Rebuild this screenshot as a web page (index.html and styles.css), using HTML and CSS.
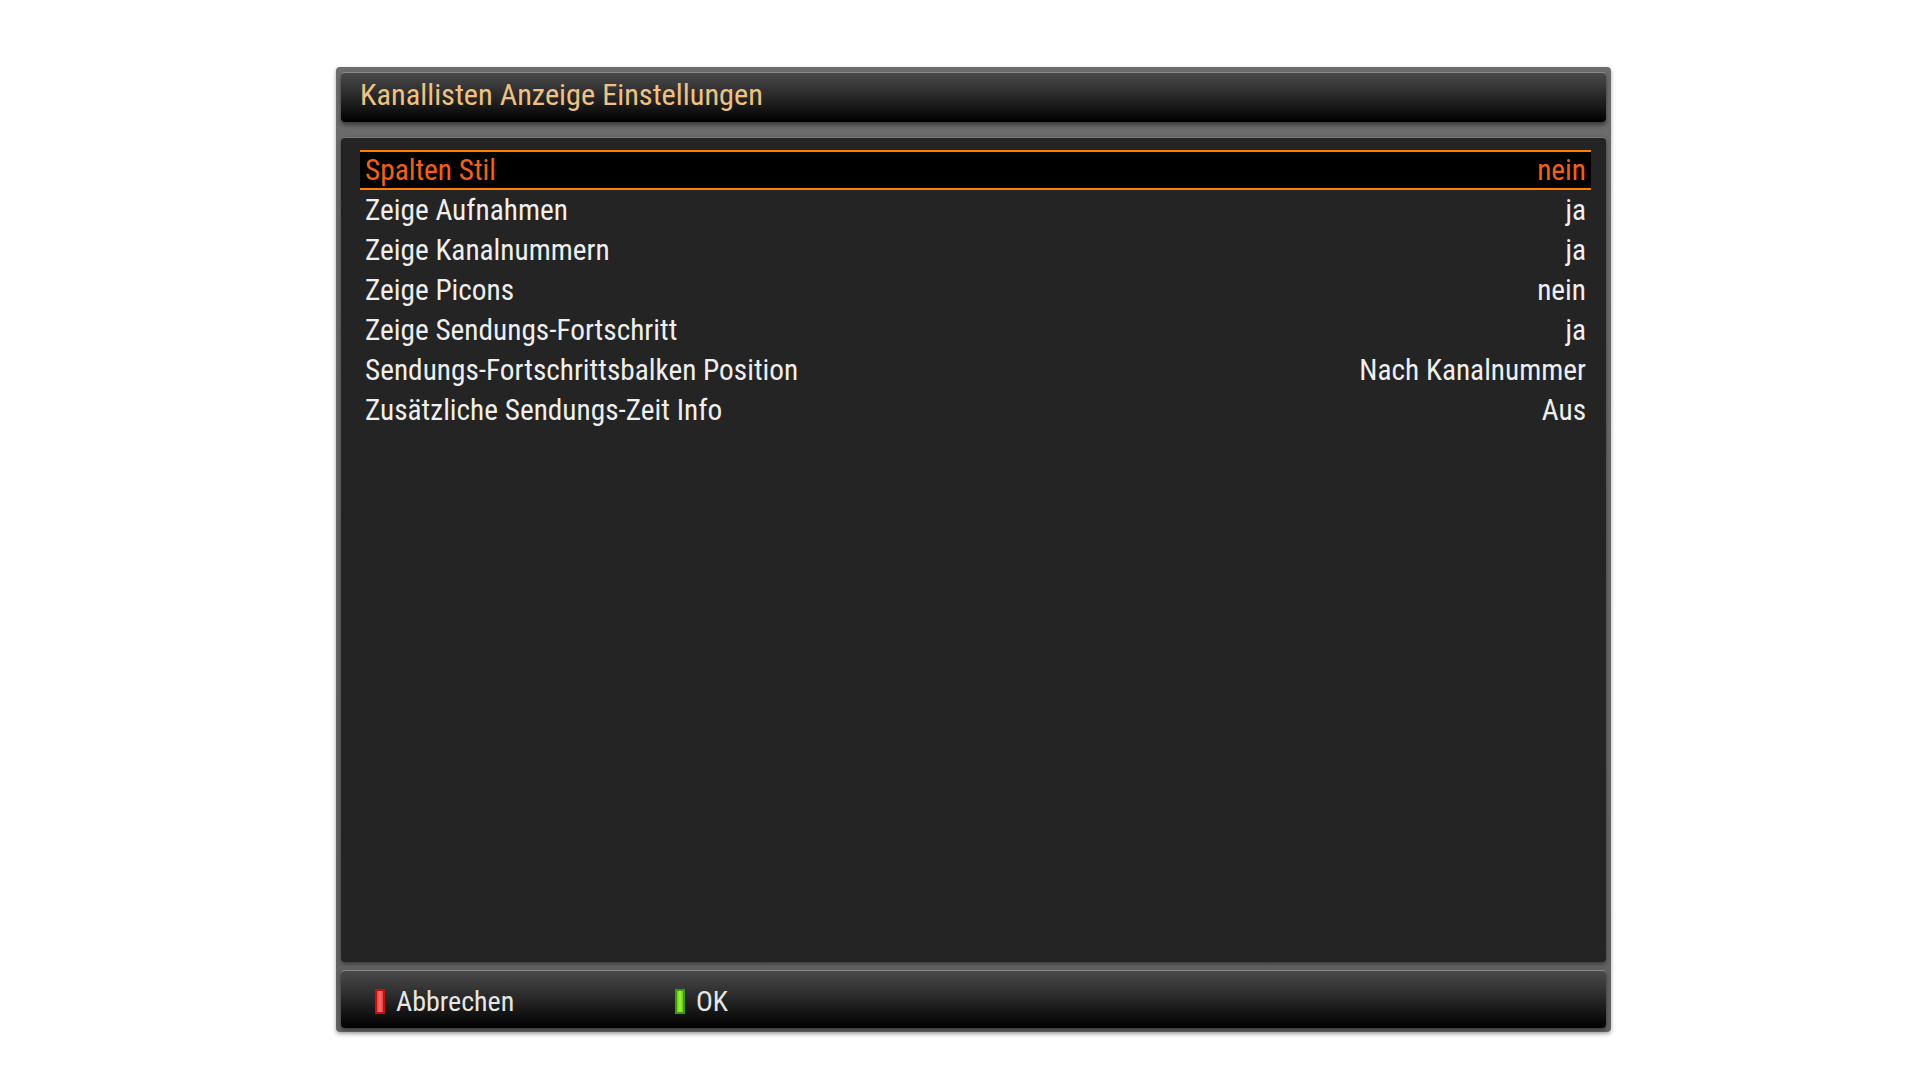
FILE: index.html
```html
<!DOCTYPE html>
<html lang="de">
<head>
<meta charset="utf-8">
<title>Kanallisten Anzeige Einstellungen</title>
<link rel="stylesheet" href="styles.css">
</head>
<body>
<div class="dialog">
  <div class="titlebar"><span class="title">Kanallisten Anzeige Einstellungen</span></div>
  <div class="content">
    <ul class="list">
      <li class="row selected"><span class="label">Spalten Stil</span><span class="value">nein</span></li>
      <li class="row"><span class="label">Zeige Aufnahmen</span><span class="value">ja</span></li>
      <li class="row"><span class="label">Zeige Kanalnummern</span><span class="value">ja</span></li>
      <li class="row"><span class="label">Zeige Picons</span><span class="value">nein</span></li>
      <li class="row"><span class="label">Zeige Sendungs-Fortschritt</span><span class="value">ja</span></li>
      <li class="row"><span class="label">Sendungs-Fortschrittsbalken Position</span><span class="value">Nach Kanalnummer</span></li>
      <li class="row"><span class="label">Zusätzliche Sendungs-Zeit Info</span><span class="value">Aus</span></li>
    </ul>
  </div>
  <div class="footer">
    <div class="button"><span class="key key-red"></span><span class="btn-text">Abbrechen</span></div>
    <div class="button"><span class="key key-green"></span><span class="btn-text">OK</span></div>
  </div>
</div>
</body>
</html>
```

FILE: styles.css
```css
html, body {
  margin: 0;
  padding: 0;
  background: #ffffff;
}

body {
  width: 1920px;
  height: 1080px;
  font-family: "Roboto Condensed", Roboto, "Liberation Sans Narrow", "Liberation Sans", sans-serif;
}

.dialog {
  box-sizing: border-box;
  margin: 67px 0 0 336px;
  width: 1275px;
  height: 965px;
  padding: 5px 5px 4px 5px;
  background: linear-gradient(to bottom, #6c6c6c, #626262);
  border-radius: 4px;
  box-shadow: 0 2px 4px rgba(0, 0, 0, 0.35);
  display: flex;
  flex-direction: column;
}

.titlebar {
  height: 50px;
  box-sizing: border-box;
  padding: 0 0 5px 19px;
  display: flex;
  align-items: center;
  background: linear-gradient(to bottom, #4a4a4a 0%, #2a2a2a 45%, #000000 100%);
  border-top: 1px solid #8a8a8a;
  border-radius: 4px;
  box-shadow: 0 3px 4px rgba(0, 0, 0, 0.45);
}

.title {
  color: #eec283;
  font-size: 30.3px;
  line-height: 1;
}

.content {
  margin-top: 15px;
  height: 825px;
  box-sizing: border-box;
  padding: 12px 15px 0 19px;
  background: #242424;
  border-top: 1px solid #7c7c7c;
  border-radius: 4px;
  box-shadow: 0 2px 4px rgba(0, 0, 0, 0.4);
}

.list {
  list-style: none;
  margin: 0;
  padding: 0;
}

.row {
  height: 40px;
  box-sizing: border-box;
  padding: 2px 5px 0 5px;
  display: flex;
  justify-content: space-between;
  align-items: center;
  color: #efefef;
  font-size: 29.3px;
  line-height: 1;
}

.row.selected {
  background: #000000;
  border-top: 2px solid #ff7d00;
  border-bottom: 2px solid #ff7d00;
  color: #f2601a;
}

.footer {
  margin-top: 8px;
  height: 58px;
  box-sizing: border-box;
  padding: 4px 0 0 34px;
  display: flex;
  align-items: center;
  background: linear-gradient(to bottom, #4a4a4a 0%, #2a2a2a 45%, #000000 100%);
  border-top: 1px solid #8a8a8a;
  border-radius: 4px;
  box-shadow: 0 2px 4px rgba(0, 0, 0, 0.45);
}

.button {
  width: 300px;
  display: flex;
  align-items: center;
}

.key {
  width: 10px;
  height: 25px;
  box-sizing: border-box;
  margin-right: 11px;
  border: 2px solid;
}

.key-red {
  border-color: #c80f0f;
  background: linear-gradient(to right, #e84040, #f47070 50%, #e84040);
}

.key-green {
  border-color: #3e9a08;
  background: linear-gradient(to right, #6ad010, #a0f040 50%, #6ad010);
}

.btn-text {
  color: #e6e6e6;
  font-size: 28px;
  line-height: 1;
}
```
